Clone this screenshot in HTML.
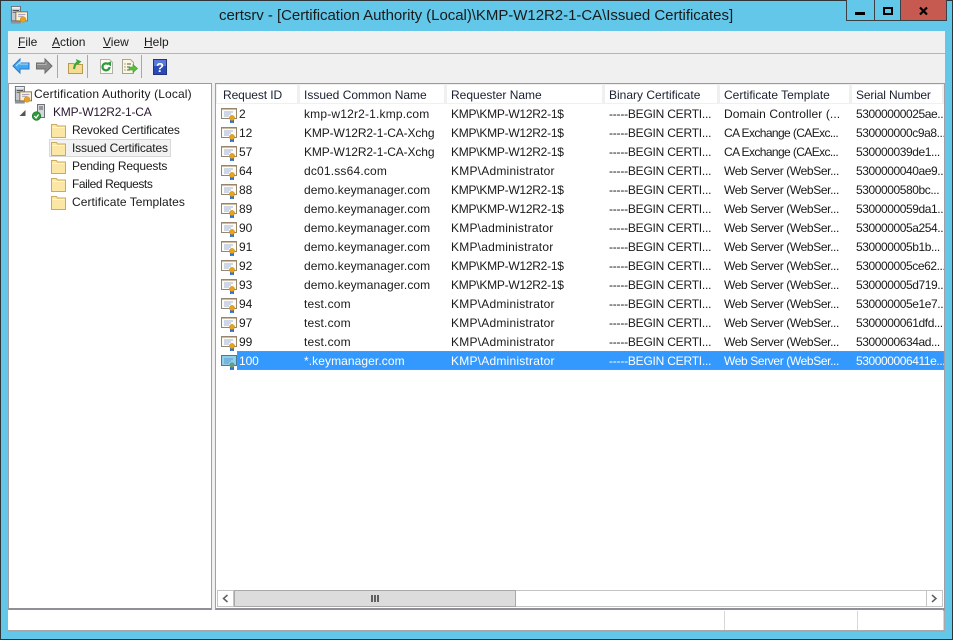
<!DOCTYPE html>
<html><head><meta charset="utf-8"><title>certsrv</title>
<style>
html,body{margin:0;padding:0}
body{width:953px;height:640px;overflow:hidden;position:relative;background:#62c7e8;font-family:"Liberation Sans",sans-serif;font-size:12px;color:#1a1a1a}
.a{position:absolute}
.t{position:absolute;white-space:nowrap;line-height:16px}
u{text-decoration:underline}
.row{position:absolute;left:0;width:728px;height:19px;overflow:hidden}
.row span{position:absolute;top:2px;line-height:16px;white-space:nowrap;color:#1a1a1a}
.row span:nth-of-type(1){left:23px;letter-spacing:-.1px}
.row span:nth-of-type(2){left:88px}
.row span:nth-of-type(3){left:235px}
.row span:nth-of-type(4){left:393px;letter-spacing:-.22px}
.row span:nth-of-type(5){left:508px;letter-spacing:-.38px}
.row span:nth-of-type(6){left:640px;letter-spacing:-.42px}
.row span.lc{letter-spacing:.18px}
.row span.dm{letter-spacing:.08px}
.row span.uc{letter-spacing:-.12px}
.row span.ku{letter-spacing:-.25px}
.row span.ad{letter-spacing:.22px}
.row span.ca{letter-spacing:-.6px}
.row span.dc{letter-spacing:.1px}
.row svg{position:absolute;left:5px;top:3px}
.sel span{color:#fff}
.hd{position:absolute;top:87px;line-height:16px;white-space:nowrap;color:#1a2030}
.sep{position:absolute;top:85px;width:3px;height:19px;background:#f0f0f0}
.fld{position:absolute;left:51px}
</style></head><body>
<svg width="0" height="0" style="position:absolute">
<symbol id="cert" viewBox="0 0 17 17">
<rect x=".5" y="1.5" width="15" height="10" fill="#fdfbf3" stroke="#97866c"/>
<rect x="1" y="2" width="14" height="1" fill="#cdbd9f"/>
<path d="M3 5h9M3 7h7M3 9h5" stroke="#9fb3de"/>
<path d="M9 13v4l2-1.500 2 1.500v-4z" fill="#2f6fd0"/>
<circle cx="11" cy="11" r="2.600" fill="#e8a21c" stroke="#c08414" stroke-width=".5"/>
</symbol>
<symbol id="certsel" viewBox="0 0 17 17">
<rect x=".5" y="1.500" width="15" height="10" fill="#8fd0e8" stroke="#4a7a92"/>
<path d="M3 5h9M3 7h7M3 9h5" stroke="#5a9ad8"/>
<path d="M9 13v4l2-1.500 2 1.500v-4z" fill="#2f6fd0"/>
<circle cx="11" cy="11" r="2.600" fill="#6a9a80"/>
</symbol>
<symbol id="srv" viewBox="0 0 20 20">
<rect x="1.500" y=".5" width="10" height="16" fill="#c4c9cd" stroke="#5f656b"/>
<rect x="2" y="1" width="9" height="2" fill="#eef0f2"/>
<path d="M3 5h7M3 7h7" stroke="#50565c"/>
<path d="M1 17h11v2.500H1z" fill="#8c9298"/>
<rect x="6.500" y="6.500" width="13" height="10" fill="#f8efd8" stroke="#8a6a3c"/>
<path d="M9 9.500h8M9 11.500h5" stroke="#9a9cc0"/>
<circle cx="14.500" cy="15" r="3.200" fill="#e8a21c" stroke="#c08414" stroke-width=".5"/>
</symbol>
<symbol id="folder" viewBox="0 0 15 15">
<path d="M.5 1.500h5l1 1.500h8v11.500h-14z" fill="#fbe6a6" stroke="#c8aa62"/>
<path d="M1.500 4.500h12" stroke="#fff5d0"/>
</symbol>
</svg>

<!-- window frame -->
<div class="a" style="left:0;top:0;width:953px;height:1px;background:#2f3436"></div>
<div class="a" style="left:0;top:0;width:1px;height:640px;background:#2f3436"></div>
<div class="a" style="left:952px;top:0;width:1px;height:640px;background:#2f3436"></div>
<div class="a" style="left:0;top:639px;width:953px;height:1px;background:#2f3436"></div>

<svg class="a" style="left:10px;top:6px" width="18" height="18"><use href="#srv" width="18" height="18"/></svg>
<div class="t" style="left:219px;top:7px;font-size:15px;line-height:18px;letter-spacing:-.035px;color:#1a1a1a">certsrv - [Certification Authority (Local)\KMP-W12R2-1-CA\Issued Certificates]</div>

<!-- caption buttons -->
<div class="a" style="left:846px;top:0;width:99px;height:20px;background:#62c7e8;border:1px solid #3a4044;border-top:0"></div>
<div class="a" style="left:874px;top:0;width:1px;height:20px;background:#3a4044"></div>
<div class="a" style="left:900px;top:0;width:45px;height:20px;background:#c75a50;border-left:1px solid #3a4044"></div>
<div class="a" style="left:855px;top:12px;width:10px;height:3px;background:#000"></div>
<div class="a" style="left:883px;top:7px;width:10px;height:8px;border:2px solid #000;box-sizing:border-box"></div>
<svg class="a" style="left:919px;top:6px" width="10" height="10"><path d="M1 1.500l7 7M8 1.500l-7 7" stroke="#000" stroke-width="2.200" fill="none"/></svg>

<!-- client -->
<div class="a" style="left:8px;top:31px;width:937px;height:601px;background:#f0f0f0"></div>
<div class="a" style="left:8px;top:53px;width:937px;height:1px;background:#b4b4bc"></div>

<!-- menu -->
<div class="t" style="left:18px;top:34px"><u>F</u>ile</div>
<div class="t" style="left:52px;top:34px"><u>A</u>ction</div>
<div class="t" style="left:103px;top:34px"><u>V</u>iew</div>
<div class="t" style="left:144px;top:34px"><u>H</u>elp</div>

<!-- toolbar -->
<svg class="a" style="left:12px;top:57px" width="18" height="18"><path d="M1 9l7-7v4h9v6H8v4z" fill="#45a8ee" stroke="#2a7ac8"/><path d="M4 9l4-4v2h8" stroke="#b4e2fb" fill="none"/></svg>
<svg class="a" style="left:35px;top:57px" width="18" height="18"><path d="M17 9l-7-7v4H1.500v6H10v4z" fill="#8a8a8a" stroke="#6c6c6c"/><path d="M2 7.500h9V5" stroke="#b4b4b4" fill="none"/></svg>
<div class="a" style="left:57px;top:55px;width:1px;height:23px;background:#a8a8a8"></div>
<svg class="a" style="left:67px;top:58px" width="17" height="17"><path d="M1.500 5.500h5l1 1h8v9h-14z" fill="#f6dc92" stroke="#b89a50"/><path d="M7 11C8 6 9 5 11 4.500" stroke="#3aa83a" stroke-width="2.200" fill="none"/><path d="M9 1l5.500 2.500-4 3.500z" fill="#3aa83a"/></svg>
<div class="a" style="left:87px;top:55px;width:1px;height:23px;background:#a8a8a8"></div>
<svg class="a" style="left:99px;top:58px" width="15" height="17"><path d="M1.500 1.500h9l3 3v11h-12z" fill="#fbfbf6" stroke="#b0b0a8"/><path d="M10.500 9a3.500 3.500 0 1 1-1-2.600" stroke="#2f9a3a" stroke-width="2.200" fill="none"/><path d="M7.500 5l4.500-1.500v5z" fill="#2f9a3a"/></svg>
<svg class="a" style="left:121px;top:58px" width="17" height="17"><path d="M1.500 1.500h8l3 3v11h-11z" fill="#fbf6e0" stroke="#a8a490"/><path d="M3.500 6h1M6 6h4M3.500 9h1M6 9h3M3.500 12h1M6 12h3" stroke="#555"/><path d="M8 9h4V6.500l4.500 4-4.500 4V12H8z" fill="#56c03c" stroke="#3a9a28" stroke-width=".6"/></svg>
<div class="a" style="left:141px;top:55px;width:1px;height:23px;background:#a8a8a8"></div>
<svg class="a" style="left:153px;top:59px" width="14" height="16"><rect width="13" height="15" x=".5" y=".5" fill="#2a4ab8" stroke="#22357a"/><rect x="1" y="1" width="12" height="6" fill="#5a78d8"/><text x="7" y="13" font-family="Liberation Sans" font-weight="bold" font-size="13" fill="#fff" text-anchor="middle">?</text></svg>

<!-- left pane -->
<div class="a" style="left:8px;top:83px;width:204px;height:527px;background:#fff;box-sizing:border-box;border:1px solid #a0a0a6;border-bottom:2px solid #8f8f96;border-top-color:#9a9aa0"></div>
<svg class="a" style="left:14px;top:86px" width="18" height="18"><use href="#srv" width="18" height="18"/></svg>
<div class="t" style="left:34px;top:86px;letter-spacing:.14px">Certification Authority (Local)</div>
<svg class="a" style="left:19px;top:109px" width="8" height="8"><path d="M6.500 1v6h-6z" fill="#555"/></svg>
<svg class="a" style="left:31px;top:104px" width="16" height="17"><rect x="6.500" y=".5" width="7" height="13" fill="#d4d8dc" stroke="#6d7278"/><path d="M8 3h4M8 5h4" stroke="#555"/><circle cx="5.500" cy="12" r="4.300" fill="#2c9a38" stroke="#1f6f2a" stroke-width=".6"/><path d="M3.300 12l1.800 2 2.500-3.500" stroke="#fff" stroke-width="1.300" fill="none"/></svg>
<div class="t" style="left:53px;top:104px;color:#2a1830;letter-spacing:-.2px">KMP-W12R2-1-CA</div>

<div class="a" style="left:49px;top:139px;width:122px;height:18px;box-sizing:border-box;border:1px solid #d9d9d9;background:#f2f2f2"></div>
<svg class="fld" style="position:absolute;top:123px" width="15" height="15"><use href="#folder"/></svg>
<div class="t" style="left:72px;top:122px;letter-spacing:-.15px">Revoked Certificates</div>
<svg class="fld" style="position:absolute;top:141px" width="15" height="15"><use href="#folder"/></svg>
<div class="t" style="left:72px;top:140px;letter-spacing:-.15px">Issued Certificates</div>
<svg class="fld" style="position:absolute;top:159px" width="15" height="15"><use href="#folder"/></svg>
<div class="t" style="left:72px;top:158px;letter-spacing:-.18px">Pending Requests</div>
<svg class="fld" style="position:absolute;top:177px" width="15" height="15"><use href="#folder"/></svg>
<div class="t" style="left:72px;top:176px;letter-spacing:-.42px">Failed Requests</div>
<svg class="fld" style="position:absolute;top:195px" width="15" height="15"><use href="#folder"/></svg>
<div class="t" style="left:72px;top:194px;letter-spacing:.05px">Certificate Templates</div>

<!-- right pane -->
<div class="a" style="left:215px;top:83px;width:730px;height:527px;background:#fff;box-sizing:border-box;border:1px solid #a0a0a6;border-bottom:2px solid #8f8f96;border-top-color:#9a9aa0"></div>
<div class="sep" style="left:297px"></div>
<div class="sep" style="left:444px"></div>
<div class="sep" style="left:602px"></div>
<div class="sep" style="left:717px"></div>
<div class="sep" style="left:849px"></div>
<div class="a" style="left:216px;top:84px;width:728px;height:1px;background:#f0f0f0"></div>
<div class="a" style="left:216px;top:103px;width:728px;height:1px;background:#f0f0f0"></div>
<div class="a" style="left:216px;top:84px;width:1px;height:20px;background:#f0f0f0"></div>
<div class="a" style="left:942px;top:84px;width:2px;height:20px;background:#f0f0f0"></div>
<div class="hd" style="left:223px;letter-spacing:-.1px">Request ID</div>
<div class="hd" style="left:304px">Issued Common Name</div>
<div class="hd" style="left:451px">Requester Name</div>
<div class="hd" style="left:609px">Binary Certificate</div>
<div class="hd" style="left:724px">Certificate Template</div>
<div class="hd" style="left:856px;letter-spacing:-.15px">Serial Number</div>

<div class="a" style="left:216px;top:104px;width:728px;height:280px">
<div class="row" style="top:0"><svg width="17" height="17"><use href="#cert"/></svg><span>2</span><span class="lc">kmp-w12r2-1.kmp.com</span><span class="ku">KMP\KMP-W12R2-1$</span><span>-----BEGIN CERTI...</span><span class="dc">Domain Controller (...</span><span>53000000025ae...</span></div>
<div class="row" style="top:19px"><svg width="17" height="17"><use href="#cert"/></svg><span>12</span><span class="uc">KMP-W12R2-1-CA-Xchg</span><span class="ku">KMP\KMP-W12R2-1$</span><span>-----BEGIN CERTI...</span><span class="ca">CA Exchange (CAExc...</span><span>530000000c9a8...</span></div>
<div class="row" style="top:38px"><svg width="17" height="17"><use href="#cert"/></svg><span>57</span><span class="uc">KMP-W12R2-1-CA-Xchg</span><span class="ku">KMP\KMP-W12R2-1$</span><span>-----BEGIN CERTI...</span><span class="ca">CA Exchange (CAExc...</span><span>530000039de1...</span></div>
<div class="row" style="top:57px"><svg width="17" height="17"><use href="#cert"/></svg><span>64</span><span class="lc">dc01.ss64.com</span><span class="ad">KMP\Administrator</span><span>-----BEGIN CERTI...</span><span>Web Server (WebSer...</span><span>5300000040ae9...</span></div>
<div class="row" style="top:76px"><svg width="17" height="17"><use href="#cert"/></svg><span>88</span><span class="dm">demo.keymanager.com</span><span class="ku">KMP\KMP-W12R2-1$</span><span>-----BEGIN CERTI...</span><span>Web Server (WebSer...</span><span>5300000580bc...</span></div>
<div class="row" style="top:95px"><svg width="17" height="17"><use href="#cert"/></svg><span>89</span><span class="dm">demo.keymanager.com</span><span class="ku">KMP\KMP-W12R2-1$</span><span>-----BEGIN CERTI...</span><span>Web Server (WebSer...</span><span>5300000059da1...</span></div>
<div class="row" style="top:114px"><svg width="17" height="17"><use href="#cert"/></svg><span>90</span><span class="dm">demo.keymanager.com</span><span class="ad">KMP\administrator</span><span>-----BEGIN CERTI...</span><span>Web Server (WebSer...</span><span>530000005a254...</span></div>
<div class="row" style="top:133px"><svg width="17" height="17"><use href="#cert"/></svg><span>91</span><span class="dm">demo.keymanager.com</span><span class="ad">KMP\administrator</span><span>-----BEGIN CERTI...</span><span>Web Server (WebSer...</span><span>530000005b1b...</span></div>
<div class="row" style="top:152px"><svg width="17" height="17"><use href="#cert"/></svg><span>92</span><span class="dm">demo.keymanager.com</span><span class="ku">KMP\KMP-W12R2-1$</span><span>-----BEGIN CERTI...</span><span>Web Server (WebSer...</span><span>530000005ce62...</span></div>
<div class="row" style="top:171px"><svg width="17" height="17"><use href="#cert"/></svg><span>93</span><span class="dm">demo.keymanager.com</span><span class="ku">KMP\KMP-W12R2-1$</span><span>-----BEGIN CERTI...</span><span>Web Server (WebSer...</span><span>530000005d719...</span></div>
<div class="row" style="top:190px"><svg width="17" height="17"><use href="#cert"/></svg><span>94</span><span class="lc">test.com</span><span class="ad">KMP\Administrator</span><span>-----BEGIN CERTI...</span><span>Web Server (WebSer...</span><span>530000005e1e7...</span></div>
<div class="row" style="top:209px"><svg width="17" height="17"><use href="#cert"/></svg><span>97</span><span class="lc">test.com</span><span class="ad">KMP\Administrator</span><span>-----BEGIN CERTI...</span><span>Web Server (WebSer...</span><span>5300000061dfd...</span></div>
<div class="row" style="top:228px"><svg width="17" height="17"><use href="#cert"/></svg><span>99</span><span class="lc">test.com</span><span class="ad">KMP\Administrator</span><span>-----BEGIN CERTI...</span><span>Web Server (WebSer...</span><span>5300000634ad...</span></div>
<div class="a" style="left:21px;top:247px;width:707px;height:19px;background:#3399ff;box-sizing:border-box;border:1px dotted #b08a50"></div>
<div class="row sel" style="top:247px"><svg width="17" height="17"><use href="#certsel"/></svg><span>100</span><span class="dm">*.keymanager.com</span><span class="ad">KMP\Administrator</span><span>-----BEGIN CERTI...</span><span>Web Server (WebSer...</span><span>530000006411e...</span></div>
</div>

<!-- scrollbar -->
<div class="a" style="left:217px;top:590px;width:726px;height:17px;box-sizing:border-box;border:1px solid #c4c4c4;background:#fff"></div>
<div class="a" style="left:217px;top:590px;width:17px;height:17px;box-sizing:border-box;border:1px solid #c4c4c4;background:#fff"></div>
<svg class="a" style="left:221px;top:594px" width="9" height="9"><path d="M6.500 1L2.500 4.500 6.500 8" stroke="#606060" stroke-width="1.500" fill="none"/></svg>
<div class="a" style="left:234px;top:590px;width:282px;height:17px;box-sizing:border-box;border:1px solid #a8a8a8;background:#dcdcdc"></div>
<div class="a" style="left:371px;top:595px;width:2px;height:7px;background:#606060"></div>
<div class="a" style="left:374px;top:595px;width:2px;height:7px;background:#606060"></div>
<div class="a" style="left:377px;top:595px;width:2px;height:7px;background:#606060"></div>
<div class="a" style="left:926px;top:590px;width:17px;height:17px;box-sizing:border-box;border:1px solid #c4c4c4;background:#fff"></div>
<svg class="a" style="left:929px;top:594px" width="9" height="9"><path d="M3 1l4 3.500L3 8" stroke="#606060" stroke-width="1.500" fill="none"/></svg>

<!-- status bar -->
<div class="a" style="left:8px;top:610px;width:937px;height:22px;background:#fff;box-sizing:border-box;border-bottom:2px solid #a8a8a8;border-right:2px solid #a8a8a8"></div>
<div class="a" style="left:724px;top:611px;width:1px;height:19px;background:#d8d8d8"></div>
<div class="a" style="left:857px;top:611px;width:1px;height:19px;background:#d8d8d8"></div>
<div class="a" style="left:943px;top:611px;width:1px;height:19px;background:#d8d8d8"></div>
</body></html>
